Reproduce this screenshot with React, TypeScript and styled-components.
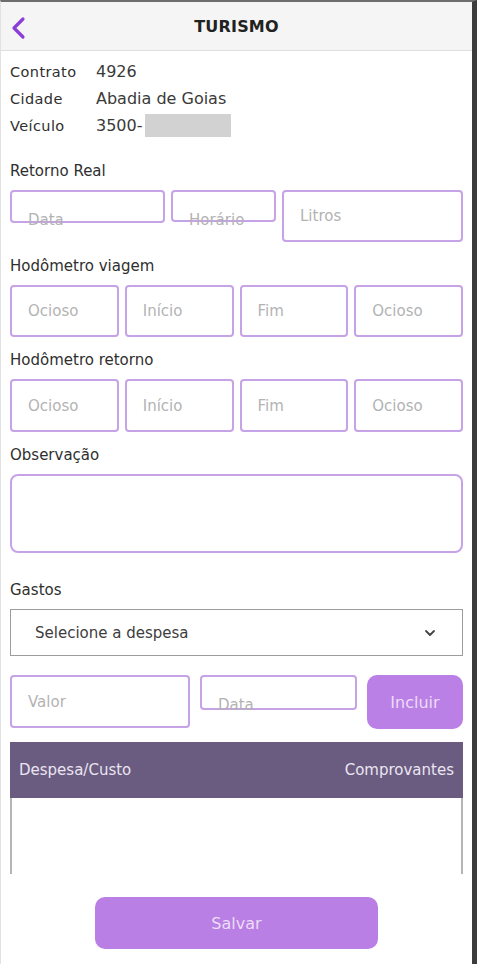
import styled, { createGlobalStyle } from "styled-components";

const GlobalStyle = createGlobalStyle`
  html, body {
    margin: 0;
    padding: 0;
    background: #ffffff;
  }
  body {
    font-family: "DejaVu Sans", "Liberation Sans", sans-serif;
    color: #333333;
  }
  * {
    box-sizing: border-box;
  }
`;

const purpleBorder = "#c6a2e6";

function App() {
    return (
        <>
            <GlobalStyle />
            <Frame>
                <Header>
                    <BackButton aria-label="voltar">
                        <svg width="16" height="24" viewBox="0 0 16 24">
                            <path d="M13 3 L4 12 L13 21" fill="none" stroke="#8a3fd6" strokeWidth="3.2" strokeLinecap="round" strokeLinejoin="round" />
                        </svg>
                    </BackButton>
                    <Title>TURISMO</Title>
                </Header>

                <Content>
                    <InfoList>
                        <InfoRow>
                            <InfoLabel>Contrato</InfoLabel>
                            <InfoValue>4926</InfoValue>
                        </InfoRow>
                        <InfoRow>
                            <InfoLabel>Cidade</InfoLabel>
                            <InfoValue>Abadia de Goias</InfoValue>
                        </InfoRow>
                        <InfoRow>
                            <InfoLabel>Veículo</InfoLabel>
                            <InfoValue>3500-<Redacted /></InfoValue>
                        </InfoRow>
                    </InfoList>

                    <SectionLabel $top={22}>Retorno Real</SectionLabel>
                    <RetornoRow>
                        <Field $height={33} $short>
                            <Placeholder>Data</Placeholder>
                        </Field>
                        <Field $height={32} $short>
                            <Placeholder>Horário</Placeholder>
                        </Field>
                        <Field $height={52}>
                            <Placeholder>Litros</Placeholder>
                        </Field>
                    </RetornoRow>

                    <SectionLabel $top={14}>Hodômetro viagem</SectionLabel>
                    <QuadRow>
                        <Field $height={52}><Placeholder>Ocioso</Placeholder></Field>
                        <Field $height={52}><Placeholder>Início</Placeholder></Field>
                        <Field $height={52}><Placeholder>Fim</Placeholder></Field>
                        <Field $height={52}><Placeholder>Ocioso</Placeholder></Field>
                    </QuadRow>

                    <SectionLabel $top={13}>Hodômetro retorno</SectionLabel>
                    <QuadRow>
                        <Field $height={53}><Placeholder>Ocioso</Placeholder></Field>
                        <Field $height={53}><Placeholder>Início</Placeholder></Field>
                        <Field $height={53}><Placeholder>Fim</Placeholder></Field>
                        <Field $height={53}><Placeholder>Ocioso</Placeholder></Field>
                    </QuadRow>

                    <SectionLabel $top={13}>Observação</SectionLabel>
                    <TextArea />

                    <SectionLabel $top={27}>Gastos</SectionLabel>
                    <Select>
                        <span>Selecione a despesa</span>
                        <svg width="12" height="8" viewBox="0 0 12 8">
                            <path d="M2 2 L6 6 L10 2" fill="none" stroke="#444" strokeWidth="1.8" strokeLinecap="round" strokeLinejoin="round" />
                        </svg>
                    </Select>

                    <GastoRow>
                        <Field $height={53}><Placeholder>Valor</Placeholder></Field>
                        <Field $height={35} $short><Placeholder>Data</Placeholder></Field>
                        <IncluirButton>Incluir</IncluirButton>
                    </GastoRow>

                    <Table>
                        <TableHead>
                            <span>Despesa/Custo</span>
                            <span>Comprovantes</span>
                        </TableHead>
                        <TableBody />
                    </Table>

                    <Footer>
                        <SaveButton>Salvar</SaveButton>
                    </Footer>
                </Content>
            </Frame>
        </>
    );
}

const Frame = styled.div`
width: 477px;
min-height: 964px;
border-top: 2px solid #6e6e6e;
border-right: 5px solid #3c3c3c;
border-left: 1px solid #e2e2e2;
background: #ffffff;
`;

const Header = styled.header`
position: relative;
height: 49px;
display: flex;
align-items: center;
justify-content: center;
background: #f5f5f5;
border-bottom: 1px solid #dedede;
`;

const BackButton = styled.div`
position: absolute;
left: 9px;
top: 14px;
display: flex;
`;

const Title = styled.h1`
margin: 0;
font-size: 16px;
font-weight: 700;
color: #222222;
letter-spacing: 0.2px;
`;

const Content = styled.main`
padding: 0 9px 0 9px;
`;

const InfoList = styled.div`
display: flex;
flex-direction: column;
padding-top: 7px;
`;

const InfoRow = styled.div`
display: flex;
align-items: center;
height: 27px;
`;

const InfoLabel = styled.span`
width: 86px;
font-size: 14.5px;
letter-spacing: 0.4px;
color: #2f2f2f;
`;

const InfoValue = styled.span`
display: flex;
align-items: center;
font-size: 16px;
color: #3a3a3a;
`;

const Redacted = styled.span`
display: inline-block;
width: 86px;
height: 23px;
margin-left: 2px;
background: #d2d2d2;
`;

const SectionLabel = styled.div<{ $top: number }>`
margin-top: ${(p) => p.$top}px;
height: 20px;
line-height: 20px;
font-size: 15px;
color: #2f2f2f;
margin-bottom: 9px;
`;

const RetornoRow = styled.div`
display: grid;
grid-template-columns: 155px 105px 1fr;
gap: 6px;
align-items: start;
`;

const QuadRow = styled.div`
display: grid;
grid-template-columns: repeat(4, 1fr);
gap: 6px;
`;

// $short: campo baixo cujo placeholder escorrega sobre a borda inferior
const Field = styled.div<{ $height: number; $short?: boolean }>`
height: ${(p) => p.$height}px;
border: 2px solid ${purpleBorder};
border-radius: 4px;
display: flex;
align-items: ${(p) => (p.$short ? "flex-start" : "center")};
padding: ${(p) => (p.$short ? "19px 0 0 16px" : "0 0 0 16px")};
overflow: visible;
background: #ffffff;
`;

const Placeholder = styled.span`
font-size: 15px;
line-height: 18px;
color: #b3b3b3;
white-space: nowrap;
`;

const TextArea = styled.div`
height: 79px;
border: 2px solid ${purpleBorder};
border-radius: 8px;
`;

const Select = styled.div`
height: 47px;
border: 1.5px solid #9c9c9c;
display: flex;
align-items: center;
justify-content: space-between;
padding: 0 26px 0 24px;
font-size: 15px;
color: #3d3d3d;
`;

const GastoRow = styled.div`
margin-top: 19px;
display: grid;
grid-template-columns: 180px 157px 1fr;
gap: 10px;
align-items: start;
`;

const IncluirButton = styled.button`
height: 54px;
border: none;
border-radius: 10px;
background: #bb80e6;
color: #eadcf7;
font-family: inherit;
font-size: 16px;
`;

const Table = styled.div`
margin-top: 13px;
`;

const TableHead = styled.div`
height: 56px;
display: flex;
align-items: center;
justify-content: space-between;
padding: 0 9px 0 9px;
background: #6a5b80;
color: #ebe5f1;
font-size: 15px;
`;

const TableBody = styled.div`
height: 76px;
border-left: 2px solid #b5b5b5;
border-right: 2px solid #b5b5b5;
`;

const Footer = styled.div`
display: flex;
justify-content: center;
padding-top: 23px;
padding-bottom: 14px;
`;

const SaveButton = styled.button`
width: 283px;
height: 52px;
border: none;
border-radius: 10px;
background: #b97fe4;
color: #ecdcf8;
font-family: inherit;
font-size: 16px;
`;

export default App;
